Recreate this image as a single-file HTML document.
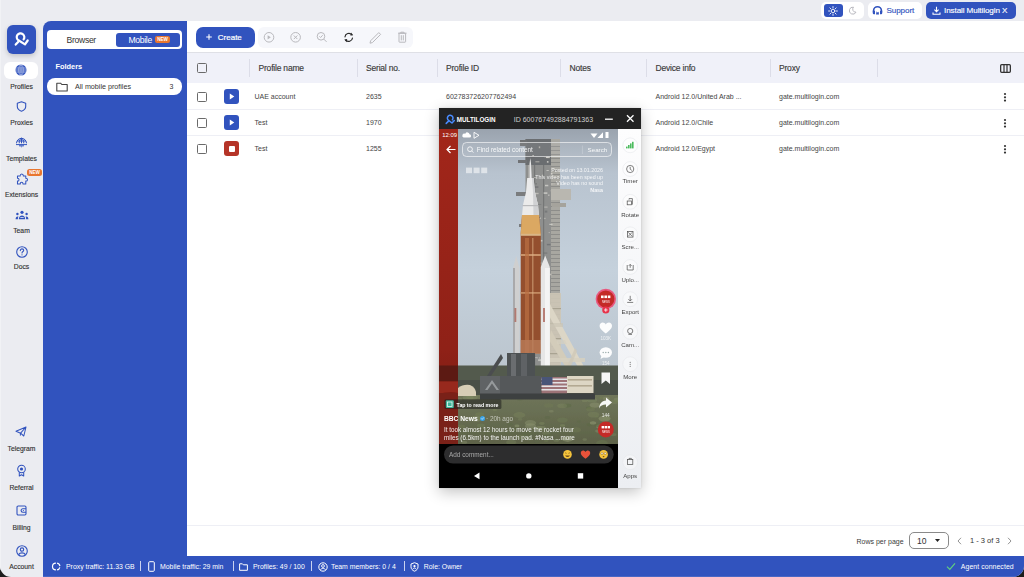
<!DOCTYPE html>
<html><head><meta charset="utf-8">
<style>
*{margin:0;padding:0;box-sizing:border-box}
html,body{width:1024px;height:577px;overflow:hidden;background:#1c1c1c;font-family:"Liberation Sans",sans-serif}
#win{position:absolute;left:0;top:0;width:1024px;height:577px;background:#ebecf1;border-radius:0 0 11px 11px;overflow:hidden}
.abs{position:absolute}
.blue{background:#3153be}
.nl{position:absolute;left:0;width:43px;text-align:center;font-size:6.8px;color:#303030;line-height:8px;-webkit-text-stroke:0.12px #303030}
svg{position:absolute;overflow:visible}
#panel{left:43px;top:21px;width:144px;height:556px;border-radius:8px 0 0 0}
#content{left:187px;top:21px;width:837px;height:535px;background:#fff}
#status{left:43px;top:556px;width:981px;height:21px;color:#fff;font-size:7.5px}
.th{position:absolute;top:63.2px;font-size:8.5px;color:#3a3a3a;font-weight:normal;line-height:10px;letter-spacing:-0.2px;-webkit-text-stroke:0.15px #3a3a3a}
.cell{position:absolute;font-size:7px;color:#444;line-height:8px}
.cb{position:absolute;left:197px;width:10px;height:10px;border:1.4px solid #6a6a6a;border-radius:1.5px}
.dv{position:absolute;top:59px;width:1px;height:18px;background:#dcdde8}
.rs{position:absolute;left:187px;width:837px;height:1px;background:#eeeff5}
.sb{position:absolute;top:562px;line-height:10px;white-space:nowrap;font-size:6.9px!important}
.sep{position:absolute;top:561px;width:1px;height:10px;background:#c9d2ef}
</style></head><body>
<div id="win"><div class="abs" style="left:0;top:0;width:1px;height:577px;background:#f1f2f5"></div>
  <!-- top bar -->
  <div class="abs" style="left:821px;top:2px;width:43px;height:17px;background:#fff;border-radius:5px"></div>
  <div class="abs blue" style="left:824px;top:4px;width:19px;height:13px;border-radius:3px"></div>
  <svg style="left:828px;top:5.5px" width="10" height="10" viewBox="0 0 10 10"><g stroke="#fff" stroke-width="0.9" stroke-linecap="round"><circle cx="5" cy="5" r="1.8" fill="none"/><path d="M5 0.6V1.8M5 8.2V9.4M0.6 5H1.8M8.2 5H9.4M1.9 1.9L2.7 2.7M7.3 7.3L8.1 8.1M1.9 8.1L2.7 7.3M7.3 2.7L8.1 1.9"/></g></svg>
  <svg style="left:848px;top:6px" width="9" height="9" viewBox="0 0 9 9"><path d="M5.5 1.2A3.5 3.5 0 1 0 8 6.2A3 3 0 0 1 5.5 1.2Z" fill="none" stroke="#b0b0b8" stroke-width="0.9"/></svg>
  <div class="abs" style="left:868px;top:2px;width:54px;height:17px;background:#fff;border-radius:5px"></div>
  <svg style="left:872px;top:5px" width="11" height="11" viewBox="0 0 11 11"><path d="M1.6 7.6V5.6A3.9 3.9 0 0 1 9.4 5.6V7.6" fill="none" stroke="#3153be" stroke-width="1.6"/><path d="M0.8 5.8H3V9.2H1.8A1 1 0 0 1 0.8 8.2Z M10.2 5.8H8V9.2H9.2A1 1 0 0 0 10.2 8.2Z" fill="#3153be"/><path d="M4 9.6L4.6 6.2L5.4 7.4L6.6 6.8L7 9.6Z" fill="#3153be"/></svg>
  <div class="abs" style="left:886.5px;top:6px;font-size:8.1px;line-height:10px;color:#3153be;font-weight:normal;letter-spacing:-0.1px;-webkit-text-stroke:0.15px #3153be">Support</div>
  <div class="abs blue" style="left:926px;top:2px;width:90px;height:17px;border-radius:5px"></div>
  <svg style="left:932px;top:5.5px" width="9" height="9" viewBox="0 0 9 9"><path d="M4.5 0.8V5.6M2.4 3.6L4.5 5.7L6.6 3.6M1 6.5V8.2H8V6.5" fill="none" stroke="#fff" stroke-width="1.1"/></svg>
  <div class="abs" style="left:944px;top:6px;font-size:8.1px;line-height:10px;color:#fff;font-weight:normal;letter-spacing:-0.1px;-webkit-text-stroke:0.15px #fff">Install Multilogin X</div>

  <!-- logo -->
  <div class="abs blue" style="left:7px;top:25px;width:29px;height:29px;border-radius:6px;box-shadow:0 2px 5px rgba(0,0,0,.18)"></div>
  <svg style="left:10px;top:28px" width="24" height="24" viewBox="0 0 24 24"><g fill="none" stroke="#fff" stroke-width="2.2" stroke-linecap="round" stroke-linejoin="round"><path d="M13.6 11.4A3.8 3.8 0 1 0 8.4 12.3L15 16.4L17.7 12.5"/><path d="M5.7 16.6L8.1 14"/></g></svg>

  <!-- left nav -->
  <div class="abs" style="left:4px;top:62px;width:34px;height:17px;background:#fff;border-radius:6px"></div>
  <svg style="left:15px;top:64px" width="12" height="12" viewBox="0 0 12 12"><circle cx="6" cy="6" r="5.5" fill="#3153be"/><g stroke="#fff" stroke-width="0.55" fill="none" opacity=".85"><ellipse cx="6" cy="6" rx="2.2" ry="5.2"/><path d="M1 4H11M1 8H11M6 0.8V11.2M0.6 6H11.4"/></g></svg>
  <div class="nl" style="top:83.1px">Profiles</div>
  <svg style="left:16px;top:101px" width="11" height="11" viewBox="0 0 11 11"><path d="M5.5 0.8L9.7 2.3V5.6C9.7 8 7.8 9.5 5.5 10.3C3.2 9.5 1.3 8 1.3 5.6V2.3Z" fill="none" stroke="#3153be" stroke-width="1.1" stroke-linejoin="round"/></svg>
  <div class="nl" style="top:119.1px">Proxies</div>
  <svg style="left:15px;top:136px" width="13" height="12" viewBox="0 0 13 12"><g fill="none" stroke="#3153be" stroke-width="1"><path d="M1.5 7.3A5 5 0 0 1 11.5 7.3"/><path d="M4.2 7.3C4.2 4.5 5.3 2.6 6.5 2.2C7.7 2.6 8.8 4.5 8.8 7.3M6.5 2.2V7.3M2 5H11"/><path d="M1 8.6H12M4 9.8H9"/></g><path d="M5.6 10.4H7.4L6.5 11.6Z" fill="#3153be"/></svg>
  <div class="nl" style="top:155.3px">Templates</div>
  <svg style="left:15.8px;top:172.8px" width="12" height="12" viewBox="0 0 13 13"><path d="M4.5 3.2C4.5 1.7 5.4 1 6.3 1C7.2 1 8 1.7 8 3.2H10.6V5.6C12 5.6 12.5 6.4 12.5 7.2C12.5 8 12 8.8 10.6 8.8V11.8H7.6C7.6 10.6 7 10 6.1 10C5.2 10 4.6 10.6 4.6 11.8H1.6V8.8C2.8 8.8 3.3 8.1 3.3 7.3C3.3 6.5 2.8 5.8 1.6 5.8V3.2Z" fill="none" stroke="#3153be" stroke-width="1.1" stroke-linejoin="round"/></svg>
  <div class="abs" style="left:27px;top:169px;width:15px;height:7px;background:#e8762f;border-radius:2.5px"></div><svg style="left:27px;top:169px" width="15" height="7" viewBox="0 0 15 7"><text x="7.5" y="5.3" text-anchor="middle" font-family="Liberation Sans" font-weight="bold" font-size="4.6" fill="#fff">NEW</text></svg>
  <div class="nl" style="top:191.3px">Extensions</div>
  <svg style="left:14.5px;top:210px" width="14" height="10" viewBox="0 0 14 10"><g fill="#3153be"><circle cx="7" cy="2.3" r="1.6"/><circle cx="2.4" cy="4" r="1.2"/><circle cx="11.6" cy="4" r="1.2"/><path d="M3.8 9.2C3.8 6.8 5.2 5.4 7 5.4C8.8 5.4 10.2 6.8 10.2 9.2Z"/><path d="M0.6 9.2C0.6 7.5 1.3 6.4 2.6 6.4C3 6.4 3.3 6.5 3.4 6.6C3 7.3 2.9 8.2 2.9 9.2Z"/><path d="M13.4 9.2C13.4 7.5 12.7 6.4 11.4 6.4C11 6.4 10.7 6.5 10.6 6.6C11 7.3 11.1 8.2 11.1 9.2Z"/></g><path d="M5.3 7.5H8.7" stroke="#fff" stroke-width="0.7"/></svg>
  <div class="nl" style="top:227.3px">Team</div>
  <svg style="left:15.5px;top:245.5px" width="12" height="12" viewBox="0 0 12 12"><circle cx="6" cy="6" r="5.3" fill="none" stroke="#3153be" stroke-width="1.1"/><path d="M4.3 4.6C4.3 3.5 5.1 2.9 6 2.9C6.9 2.9 7.7 3.5 7.7 4.4C7.7 5.5 6 5.6 6 7" fill="none" stroke="#3153be" stroke-width="1.1" stroke-linecap="round"/><circle cx="6" cy="8.8" r="0.65" fill="#3153be"/></svg>
  <div class="nl" style="top:263.3px">Docs</div>

  <svg style="left:15px;top:425.5px" width="12" height="11" viewBox="0 0 12 11"><path d="M1 5.2L11 1L8.8 10L5.6 7.2ZM5.6 7.2L11 1" fill="none" stroke="#3153be" stroke-width="1.05" stroke-linejoin="round"/><path d="M5.4 7V9.6" stroke="#3153be" stroke-width="1"/></svg>
  <div class="nl" style="top:444.5px">Telegram</div>
  <svg style="left:16px;top:464px" width="11" height="13" viewBox="0 0 11 13"><circle cx="5.5" cy="5" r="3.8" fill="none" stroke="#3153be" stroke-width="1.05"/><circle cx="5.5" cy="5" r="1.6" fill="#3153be"/><path d="M3.3 8.2V12L5.5 10.8L7.7 12V8.2" fill="none" stroke="#3153be" stroke-width="1.05" stroke-linejoin="round"/></svg>
  <div class="nl" style="top:484.3px">Referral</div>
  <svg style="left:16px;top:505px" width="11" height="11" viewBox="0 0 11 11"><rect x="1" y="1" width="9" height="9" rx="1.2" fill="none" stroke="#3153be" stroke-width="1.1"/><path d="M10 3.8H6.8A1.7 1.7 0 0 0 6.8 7.2H10" fill="none" stroke="#3153be" stroke-width="1.1"/><circle cx="7.4" cy="5.5" r="0.6" fill="#3153be"/></svg>
  <div class="nl" style="top:523.8px">Billing</div>
  <svg style="left:15.5px;top:544.5px" width="12" height="12" viewBox="0 0 12 12"><circle cx="6" cy="6" r="5.3" fill="none" stroke="#3153be" stroke-width="1.1"/><circle cx="6" cy="4.6" r="1.7" fill="none" stroke="#3153be" stroke-width="1.1"/><path d="M2.6 9.6C3.3 8.4 4.5 7.9 6 7.9C7.5 7.9 8.7 8.4 9.4 9.6" fill="none" stroke="#3153be" stroke-width="1.1"/></svg>
  <div class="nl" style="top:563.3px">Account</div>

  <!-- blue panel -->
  <div id="panel" class="abs blue"></div>
  <div class="abs" style="left:47px;top:30px;width:135px;height:19px;background:#fff;border-radius:4px"></div>
  <div class="abs" style="left:66.5px;top:34.6px;font-size:8.6px;line-height:10px;color:#333;letter-spacing:-0.3px;white-space:nowrap">Browser</div>
  <div class="abs" style="left:116px;top:32.5px;width:64px;height:14px;background:#3153be;border-radius:3px"></div>
  <div class="abs" style="left:128.4px;top:34.6px;font-size:8.6px;line-height:10px;color:#fff;letter-spacing:-0.3px">Mobile</div>
  <div class="abs" style="left:154.5px;top:36px;width:15px;height:7px;background:#e8762f;border-radius:2px"></div><svg style="left:154.5px;top:36px" width="15" height="7" viewBox="0 0 15 7"><text x="7.5" y="5.2" text-anchor="middle" font-family="Liberation Sans" font-weight="bold" font-size="4.6" fill="#fff">NEW</text></svg>
  <div class="abs" style="left:55.5px;top:62px;font-size:7.4px;line-height:10px;font-weight:bold;color:#fff">Folders</div>
  <div class="abs" style="left:47px;top:78px;width:135px;height:17px;background:#fff;border-radius:8px"></div>
  <svg style="left:56px;top:81.5px" width="12" height="10" viewBox="0 0 12 10"><path d="M0.8 1.2H4.6L5.8 2.5H11.2V9H0.8Z" fill="none" stroke="#444" stroke-width="1.1" stroke-linejoin="round"/></svg>
  <div class="abs" style="left:75px;top:82.5px;font-size:7.15px;line-height:8px;color:#333">All mobile profiles</div>
  <div class="abs" style="left:169.5px;top:82.5px;font-size:7px;line-height:8px;color:#333">3</div>

  <!-- content -->
  <div id="content" class="abs"></div>
  <div class="abs blue" style="left:195.5px;top:26.5px;width:59px;height:21px;border-radius:7px"></div>
  <svg style="left:205.8px;top:34.4px" width="6" height="6" viewBox="0 0 6 6"><path d="M3 0.2V5.8M0.2 3H5.8" stroke="#fff" stroke-width="1.1"/></svg>
  <div class="abs" style="left:217.8px;top:32.6px;font-size:8px;line-height:10px;color:#fff;font-weight:normal;-webkit-text-stroke:0.2px #fff">Create</div>
  <div class="abs" style="left:258px;top:26.5px;width:155px;height:21px;background:#f6f7fb;border-radius:6px"></div>
  <g></g>
  <svg style="left:262px;top:31px" width="150" height="13" viewBox="0 0 150 13">
    <g fill="none" stroke="#b9b9bd" stroke-width="1">
      <circle cx="7" cy="6.3" r="4.8"/><path d="M5.6 4.2V8.4L8.8 6.3Z" fill="#b9b9bd" stroke="none"/>
      <circle cx="33.6" cy="6.3" r="4.8"/><path d="M31.8 4.5L35.4 8.1M35.4 4.5L31.8 8.1"/>
      <circle cx="59" cy="5.3" r="3.8"/><path d="M61.8 8.1L64.6 10.9M57.4 5.3L58.6 6.5L60.7 4.2"/>
      <path d="M108 12.2L108.6 9.8L116.8 1.6L118.6 3.4L110.4 11.6Z"/>
      <rect x="137" y="2.2" width="6.6" height="9" rx="0.6"/><path d="M136 2.2H144.6M138.8 2.2V1.2H141.8V2.2M139.3 4.2V9.4M141.3 4.2V9.4"/>
    </g>
    <g fill="none" stroke="#2b2b2b" stroke-width="1.2" stroke-linecap="round"><path d="M83 5.8A3.9 3.9 0 0 1 89.8 3.7M90.5 7A3.9 3.9 0 0 1 83.7 9.1"/></g>
    <path d="M89 1.5L91.2 4.3L88.3 4.6Z M84.6 11.2L82.3 8.4L85.2 8.1Z" fill="#2b2b2b"/>
  </svg>

  <!-- table header -->
  <div class="abs" style="left:187px;top:52px;width:837px;height:1.5px;background:#dfe0e6"></div>
  <div class="abs" style="left:187px;top:53px;width:837px;height:30px;background:#f0f1f9"></div>
  <div class="cb" style="top:63px"></div>
  <div class="dv" style="left:249px"></div>
  <div class="dv" style="left:357px"></div>
  <div class="dv" style="left:437px"></div>
  <div class="dv" style="left:560px"></div>
  <div class="dv" style="left:646px"></div>
  <div class="dv" style="left:770px"></div>
  <div class="dv" style="left:877px"></div>
  <div class="th" style="left:258.5px">Profile name</div>
  <div class="th" style="left:366px">Serial no.</div>
  <div class="th" style="left:446px">Profile ID</div>
  <div class="th" style="left:569.5px">Notes</div>
  <div class="th" style="left:655.5px">Device info</div>
  <div class="th" style="left:779px">Proxy</div>
  <svg style="left:1000px;top:64px" width="11" height="9" viewBox="0 0 11 9"><rect x="0.65" y="0.65" width="9.7" height="7.7" rx="1" fill="none" stroke="#333" stroke-width="1.3"/><path d="M4 0.7V8.3M7 0.7V8.3" stroke="#333" stroke-width="1.2"/></svg>

  <!-- rows -->
  <div class="rs" style="top:109px"></div>
  <div class="rs" style="top:135px"></div>
  <div class="cb" style="top:92px"></div>
  <div class="cb" style="top:118px"></div>
  <div class="cb" style="top:144px"></div>
  <div class="abs blue" style="left:224px;top:89px;width:15px;height:15px;border-radius:3px"></div>
  <div class="abs blue" style="left:224px;top:115px;width:15px;height:15px;border-radius:3px"></div>
  <div class="abs" style="left:224px;top:141px;width:15px;height:15px;border-radius:3px;background:#b53428"></div>
  <svg style="left:224px;top:89px" width="15" height="41" viewBox="0 0 15 41"><path d="M5.8 4.6V10.4L10.3 7.5Z M5.8 30.6V36.4L10.3 33.5Z" fill="#fff"/></svg>
  <div class="abs" style="left:228.5px;top:145.5px;width:6px;height:6px;background:#fff;border-radius:1px"></div>

  <div class="cell" style="left:254.5px;top:92.5px">UAE account</div>
  <div class="cell" style="left:254.5px;top:118.5px">Test</div>
  <div class="cell" style="left:254.5px;top:144.5px">Test</div>
  <div class="cell" style="left:366px;top:92.5px">2635</div>
  <div class="cell" style="left:366px;top:118.5px">1970</div>
  <div class="cell" style="left:366px;top:144.5px">1255</div>
  <div class="cell" style="left:446px;top:92.5px">602783726207762494</div>
  <div class="cell" style="left:655.5px;top:92.5px">Android 12.0/United Arab ...</div>
  <div class="cell" style="left:655.5px;top:118.5px">Android 12.0/Chile</div>
  <div class="cell" style="left:655.5px;top:144.5px">Android 12.0/Egypt</div>
  <div class="cell" style="left:779px;top:92.5px">gate.multilogin.com</div>
  <div class="cell" style="left:779px;top:118.5px">gate.multilogin.com</div>
  <div class="cell" style="left:779px;top:144.5px">gate.multilogin.com</div>
  <svg style="left:1003px;top:92px" width="4" height="60" viewBox="0 0 4 60"><g fill="#333"><circle cx="2" cy="2" r="1.1"/><circle cx="2" cy="5.3" r="1.1"/><circle cx="2" cy="8.6" r="1.1"/><circle cx="2" cy="28" r="1.1"/><circle cx="2" cy="31.3" r="1.1"/><circle cx="2" cy="34.6" r="1.1"/><circle cx="2" cy="54" r="1.1"/><circle cx="2" cy="57.3" r="1.1"/><circle cx="2" cy="60.6" r="1.1"/></g></svg>

  <!-- footer -->
  <div class="rs" style="top:525px"></div>
  <div class="abs" style="left:856.5px;top:537.5px;font-size:7px;line-height:8px;color:#3a3a3a">Rows per page</div>
  <div class="abs" style="left:908.5px;top:532px;width:40px;height:17px;border:1px solid #8a8a8a;border-radius:5px"></div>
  <div class="abs" style="left:917px;top:536px;font-size:8.6px;line-height:10px;color:#333">10</div>
  <svg style="left:934.5px;top:539px" width="5" height="3" viewBox="0 0 5 3"><path d="M0 0H5L2.5 3Z" fill="#222"/></svg>
  <svg style="left:956.5px;top:537px" width="5" height="8" viewBox="0 0 5 8"><path d="M4 0.8L1 4L4 7.2" fill="none" stroke="#888" stroke-width="0.9"/></svg>
  <div class="abs" style="left:970px;top:537px;font-size:7.5px;line-height:8px;color:#333">1 - 3 of 3</div>
  <svg style="left:1007px;top:537px" width="5" height="8" viewBox="0 0 5 8"><path d="M1 0.8L4 4L1 7.2" fill="none" stroke="#888" stroke-width="0.9"/></svg>

  <!-- status bar -->
  <div id="status" class="abs blue"></div>
  <div class="abs" style="left:43px;top:576px;width:981px;height:1px;background:#4866c4"></div>
  <svg style="left:52px;top:561.5px" width="9" height="9" viewBox="0 0 9 9"><g fill="none" stroke="#fff" stroke-width="1.2"><path d="M3.9 1.1A3.4 3.4 0 0 0 3.9 7.9M5.1 1.1A3.4 3.4 0 0 1 7.9 4.1M7.8 5.3A3.4 3.4 0 0 1 5.1 7.9"/></g></svg>
  <div class="sb" style="left:66px;color:#fff;font-size:7.5px">Proxy traffic: 11.33 GB</div>
  <div class="sep" style="left:140px"></div>
  <svg style="left:147.5px;top:561px" width="7" height="11" viewBox="0 0 7 11"><rect x="0.7" y="0.7" width="5.6" height="9.6" rx="1" fill="none" stroke="#fff" stroke-width="1"/></svg>
  <div class="sb" style="left:160px;color:#fff;font-size:7.5px">Mobile traffic: 29 min</div>
  <div class="sep" style="left:233px"></div>
  <svg style="left:239px;top:562.5px" width="9" height="8" viewBox="0 0 9 8"><path d="M0.6 0.8H3.4L4.3 1.8H8.4V7.3H0.6Z" fill="none" stroke="#fff" stroke-width="1"/></svg>
  <div class="sb" style="left:253px;color:#fff;font-size:7.5px">Profiles: 49 / 100</div>
  <div class="sep" style="left:311px"></div>
  <svg style="left:318px;top:561.5px" width="10" height="10" viewBox="0 0 10 10"><circle cx="5" cy="5" r="4.2" fill="none" stroke="#fff" stroke-width="1"/><circle cx="5" cy="4" r="1.4" fill="none" stroke="#fff" stroke-width="0.9"/><path d="M2.5 7.8C3 6.8 3.9 6.4 5 6.4C6.1 6.4 7 6.8 7.5 7.8" fill="none" stroke="#fff" stroke-width="0.9"/></svg>
  <div class="sb" style="left:331px;color:#fff;font-size:7.5px">Team members: 0 / 4</div>
  <div class="sep" style="left:403.5px"></div>
  <svg style="left:410px;top:561.5px" width="9" height="10" viewBox="0 0 9 10"><path d="M4.5 0.7L8 2V4.8C8 7 6.5 8.4 4.5 9.2C2.5 8.4 1 7 1 4.8V2Z" fill="none" stroke="#fff" stroke-width="1"/><circle cx="4.5" cy="4.2" r="1.1" fill="#fff"/><path d="M2.9 7C3.3 6.3 3.8 6 4.5 6C5.2 6 5.7 6.3 6.1 7" stroke="#fff" stroke-width="0.9" fill="none"/></svg>
  <div class="sb" style="left:423.8px;color:#fff;font-size:7.5px">Role: Owner</div>
  <svg style="left:946px;top:561.5px" width="10" height="9" viewBox="0 0 10 9"><path d="M1 4.6L3.8 7.4L9 1.4" fill="none" stroke="#5fcf7f" stroke-width="1.2"/></svg>
  <div class="sb" style="left:960.8px;color:#fff;font-size:7.5px;letter-spacing:0.08px">Agent connected</div>

  <!-- phone window -->
  <div class="abs" style="left:439px;top:108px;width:202px;height:380px;background:#dfe0e4;box-shadow:0 4px 14px rgba(0,0,0,.24),0 0 2px rgba(0,0,0,.12)"></div>
  <div class="abs" style="left:618px;top:129px;width:23px;height:359px;background:linear-gradient(#fdfdfe,#eceef2)"></div>
  <svg style="left:439px;top:108px" width="202" height="380" viewBox="0 0 202 380">
    <defs>
      <linearGradient id="sky" x1="0" y1="0" x2="0" y2="1">
        <stop offset="0" stop-color="#9aa3ae"/>
        <stop offset="0.14" stop-color="#b8c3cf"/>
        <stop offset="0.45" stop-color="#c5d1dc"/>
        <stop offset="0.75" stop-color="#bcc6cf"/>
        <stop offset="1" stop-color="#b5bfc8"/>
      </linearGradient>
      <linearGradient id="red" x1="0" y1="0" x2="0" y2="1">
        <stop offset="0" stop-color="#a2261a"/>
        <stop offset="0.7" stop-color="#8f2117"/>
        <stop offset="1" stop-color="#6e1a12"/>
      </linearGradient>
      <linearGradient id="veg" x1="0" y1="0" x2="0" y2="1">
        <stop offset="0" stop-color="#6f755a"/>
        <stop offset="0.5" stop-color="#666c50"/>
        <stop offset="1" stop-color="#5d6249"/>
      </linearGradient>
      <linearGradient id="shade" x1="0" y1="0" x2="0" y2="1">
        <stop offset="0" stop-color="#000" stop-opacity="0"/>
        <stop offset="1" stop-color="#000" stop-opacity="0.35"/>
      </linearGradient>
      <linearGradient id="topshade" x1="0" y1="0" x2="0" y2="1">
        <stop offset="0" stop-color="#000" stop-opacity="0.18"/>
        <stop offset="1" stop-color="#000" stop-opacity="0"/>
      </linearGradient>
      <filter id="bl" x="-10%" y="-10%" width="120%" height="120%"><feGaussianBlur stdDeviation="0.6"/></filter>
      <clipPath id="scr"><rect x="0" y="21" width="179" height="315"/></clipPath>
    </defs>
    <!-- title bar -->
    <rect x="0" y="0" width="202" height="21" fill="#232323"/>
    <g fill="none" stroke="#4a8cff" stroke-width="1.5" stroke-linecap="round" stroke-linejoin="round"><path d="M13.4 11.8A2.8 2.8 0 1 0 9.6 12.4L13 15L15.3 12.6"/><path d="M7.2 15.4L9.3 13.4"/></g>
    <text x="17.8" y="13.6" font-family="Liberation Sans" font-weight="bold" font-size="6.3" fill="#fff">MULTILOGIN</text>
    <text x="74.7" y="13.6" font-family="Liberation Sans" font-size="7.04" fill="#d0d0d0">ID 600767492884791363</text>
    <path d="M166 11.2H173.8" stroke="#fff" stroke-width="1.3"/>
    <path d="M188 7.2L194.5 13.7M194.5 7.2L188 13.7" stroke="#fff" stroke-width="1.3"/>
    <g clip-path="url(#scr)">
      <!-- scene -->
      <rect x="0" y="21" width="179" height="315" fill="url(#sky)"/>
      <g filter="url(#bl)">
        <!-- tower upper -->
        <rect x="86.5" y="31" width="34.5" height="236" fill="#8e8f8e"/>
        <rect x="86.5" y="31" width="26" height="26" fill="#6b6d6f"/>
        <rect x="112" y="31" width="9" height="236" fill="#a8a7a1"/>
        <rect x="112" y="34" width="9" height="0.9" fill="#7c7d7c" opacity=".7"/>
        <rect x="112" y="38" width="9" height="0.9" fill="#7c7d7c" opacity=".7"/>
        <rect x="112" y="42" width="9" height="0.9" fill="#7c7d7c" opacity=".7"/>
        <rect x="112" y="46" width="9" height="0.9" fill="#7c7d7c" opacity=".7"/>
        <rect x="112" y="50" width="9" height="0.9" fill="#7c7d7c" opacity=".7"/>
        <rect x="112" y="54" width="9" height="0.9" fill="#7c7d7c" opacity=".7"/>
        <rect x="112" y="58" width="9" height="0.9" fill="#7c7d7c" opacity=".7"/>
        <rect x="112" y="62" width="9" height="0.9" fill="#7c7d7c" opacity=".7"/>
        <rect x="112" y="66" width="9" height="0.9" fill="#7c7d7c" opacity=".7"/>
        <rect x="112" y="70" width="9" height="0.9" fill="#7c7d7c" opacity=".7"/>
        <rect x="112" y="74" width="9" height="0.9" fill="#7c7d7c" opacity=".7"/>
        <rect x="112" y="78" width="9" height="0.9" fill="#7c7d7c" opacity=".7"/>
        <rect x="112" y="82" width="9" height="0.9" fill="#7c7d7c" opacity=".7"/>
        <rect x="112" y="86" width="9" height="0.9" fill="#7c7d7c" opacity=".7"/>
        <rect x="112" y="90" width="9" height="0.9" fill="#7c7d7c" opacity=".7"/>
        <rect x="112" y="94" width="9" height="0.9" fill="#7c7d7c" opacity=".7"/>
        <rect x="112" y="98" width="9" height="0.9" fill="#7c7d7c" opacity=".7"/>
        <rect x="112" y="102" width="9" height="0.9" fill="#7c7d7c" opacity=".7"/>
        <rect x="112" y="106" width="9" height="0.9" fill="#7c7d7c" opacity=".7"/>
        <rect x="112" y="110" width="9" height="0.9" fill="#7c7d7c" opacity=".7"/>
        <rect x="112" y="114" width="9" height="0.9" fill="#7c7d7c" opacity=".7"/>
        <rect x="112" y="118" width="9" height="0.9" fill="#7c7d7c" opacity=".7"/>
        <rect x="112" y="122" width="9" height="0.9" fill="#7c7d7c" opacity=".7"/>
        <rect x="112" y="126" width="9" height="0.9" fill="#7c7d7c" opacity=".7"/>
        <rect x="112" y="130" width="9" height="0.9" fill="#7c7d7c" opacity=".7"/>
        <rect x="112" y="134" width="9" height="0.9" fill="#7c7d7c" opacity=".7"/>
        <rect x="112" y="138" width="9" height="0.9" fill="#7c7d7c" opacity=".7"/>
        <rect x="112" y="142" width="9" height="0.9" fill="#7c7d7c" opacity=".7"/>
        <rect x="112" y="146" width="9" height="0.9" fill="#7c7d7c" opacity=".7"/>
        <rect x="112" y="150" width="9" height="0.9" fill="#7c7d7c" opacity=".7"/>
        <rect x="112" y="154" width="9" height="0.9" fill="#7c7d7c" opacity=".7"/>
        <rect x="112" y="158" width="9" height="0.9" fill="#7c7d7c" opacity=".7"/>
        <rect x="112" y="162" width="9" height="0.9" fill="#7c7d7c" opacity=".7"/>
        <rect x="112" y="166" width="9" height="0.9" fill="#7c7d7c" opacity=".7"/>
        <rect x="112" y="170" width="9" height="0.9" fill="#7c7d7c" opacity=".7"/>
        <rect x="112" y="174" width="9" height="0.9" fill="#7c7d7c" opacity=".7"/>
        <rect x="112" y="178" width="9" height="0.9" fill="#7c7d7c" opacity=".7"/>
        <rect x="112" y="182" width="9" height="0.9" fill="#7c7d7c" opacity=".7"/>
        <rect x="112" y="186" width="9" height="0.9" fill="#7c7d7c" opacity=".7"/>
        <rect x="112" y="190" width="9" height="0.9" fill="#7c7d7c" opacity=".7"/>
        <rect x="112" y="194" width="9" height="0.9" fill="#7c7d7c" opacity=".7"/>
        <rect x="112" y="198" width="9" height="0.9" fill="#7c7d7c" opacity=".7"/>
        <rect x="112" y="202" width="9" height="0.9" fill="#7c7d7c" opacity=".7"/>
        <rect x="112" y="206" width="9" height="0.9" fill="#7c7d7c" opacity=".7"/>
        <rect x="112" y="210" width="9" height="0.9" fill="#7c7d7c" opacity=".7"/>
        <rect x="112" y="214" width="9" height="0.9" fill="#7c7d7c" opacity=".7"/>
        <rect x="112" y="218" width="9" height="0.9" fill="#7c7d7c" opacity=".7"/>
        <rect x="112" y="222" width="9" height="0.9" fill="#7c7d7c" opacity=".7"/>
        <rect x="112" y="226" width="9" height="0.9" fill="#7c7d7c" opacity=".7"/>
        <rect x="112" y="230" width="9" height="0.9" fill="#7c7d7c" opacity=".7"/>
        <rect x="112" y="234" width="9" height="0.9" fill="#7c7d7c" opacity=".7"/>
        <rect x="112" y="238" width="9" height="0.9" fill="#7c7d7c" opacity=".7"/>
        <rect x="112" y="242" width="9" height="0.9" fill="#7c7d7c" opacity=".7"/>
        <rect x="112" y="246" width="9" height="0.9" fill="#7c7d7c" opacity=".7"/>
        <rect x="112" y="250" width="9" height="0.9" fill="#7c7d7c" opacity=".7"/>
        <rect x="112" y="254" width="9" height="0.9" fill="#7c7d7c" opacity=".7"/>
        <rect x="112" y="258" width="9" height="0.9" fill="#7c7d7c" opacity=".7"/>
        <rect x="112" y="262" width="9" height="0.9" fill="#7c7d7c" opacity=".7"/>
        <rect x="95" y="57" width="1.2" height="210" fill="#6e6f71" opacity=".8"/>
        <rect x="104" y="57" width="1.2" height="210" fill="#6e6f71" opacity=".8"/>
        <rect x="89" y="57" width="1" height="210" fill="#b8b7b2" opacity=".6"/>
        <rect x="103.2" y="205.6" width="3.4" height="1.9" fill="#707274" opacity="0.51"/>
        <rect x="99.1" y="251.2" width="2.9" height="1.9" fill="#d9d8d2" opacity="0.65"/>
        <rect x="109.6" y="124.1" width="1.3" height="1.0" fill="#c8c6bf" opacity="0.66"/>
        <rect x="91.7" y="234.0" width="2.2" height="1.7" fill="#d9d8d2" opacity="0.56"/>
        <rect x="103.1" y="66.6" width="1.0" height="1.8" fill="#c8c6bf" opacity="0.81"/>
        <rect x="112.0" y="75.5" width="1.5" height="1.1" fill="#c8c6bf" opacity="0.72"/>
        <rect x="104.6" y="84.3" width="3.8" height="1.6" fill="#e8e6e0" opacity="0.62"/>
        <rect x="96.4" y="75.5" width="1.4" height="0.8" fill="#5f6163" opacity="0.83"/>
        <rect x="102.2" y="172.7" width="3.1" height="0.8" fill="#5f6163" opacity="0.83"/>
        <rect x="99.5" y="109.4" width="2.4" height="1.6" fill="#d9d8d2" opacity="0.60"/>
        <rect x="111.4" y="252.5" width="2.1" height="1.2" fill="#707274" opacity="0.82"/>
        <rect x="96.5" y="168.7" width="1.0" height="0.8" fill="#c8c6bf" opacity="0.75"/>
        <rect x="111.8" y="64.9" width="1.7" height="1.8" fill="#e8e6e0" opacity="0.64"/>
        <rect x="96.2" y="156.6" width="3.3" height="0.8" fill="#5f6163" opacity="0.84"/>
        <rect x="88.0" y="251.8" width="1.3" height="1.1" fill="#707274" opacity="0.65"/>
        <rect x="90.9" y="100.3" width="3.1" height="0.8" fill="#5f6163" opacity="0.62"/>
        <rect x="107.8" y="179.7" width="3.2" height="1.1" fill="#e8e6e0" opacity="0.56"/>
        <rect x="88.3" y="261.0" width="2.6" height="1.2" fill="#c8c6bf" opacity="0.80"/>
        <rect x="95.9" y="94.5" width="3.0" height="0.9" fill="#d9d8d2" opacity="0.82"/>
        <rect x="95.7" y="84.8" width="3.9" height="1.4" fill="#c8c6bf" opacity="0.75"/>
        <rect x="107.5" y="62.1" width="2.3" height="0.9" fill="#e8e6e0" opacity="0.62"/>
        <rect x="98.8" y="263.8" width="3.6" height="2.0" fill="#e8e6e0" opacity="0.88"/>
        <rect x="104.9" y="109.8" width="1.8" height="1.3" fill="#c8c6bf" opacity="0.55"/>
        <rect x="108.4" y="158.2" width="1.5" height="1.9" fill="#5f6163" opacity="0.57"/>
        <rect x="99.8" y="154.4" width="2.6" height="1.4" fill="#d9d8d2" opacity="0.81"/>
        <rect x="107.1" y="195.0" width="3.0" height="1.7" fill="#5f6163" opacity="0.72"/>
        <rect x="104.4" y="226.8" width="1.8" height="2.0" fill="#5f6163" opacity="0.88"/>
        <rect x="95.8" y="78.4" width="3.6" height="1.3" fill="#5f6163" opacity="0.63"/>
        <rect x="94.1" y="103.3" width="2.5" height="1.6" fill="#5f6163" opacity="0.64"/>
        <rect x="103.7" y="204.7" width="3.5" height="1.2" fill="#c8c6bf" opacity="0.85"/>
        <rect x="104.9" y="258.6" width="3.9" height="1.4" fill="#707274" opacity="0.89"/>
        <rect x="92.2" y="119.8" width="3.6" height="1.1" fill="#d9d8d2" opacity="0.79"/>
        <rect x="106.0" y="76.8" width="3.3" height="1.5" fill="#e8e6e0" opacity="0.62"/>
        <rect x="101.4" y="234.0" width="1.8" height="2.0" fill="#c8c6bf" opacity="0.56"/>
        <rect x="98.5" y="184.9" width="1.7" height="1.6" fill="#d9d8d2" opacity="0.89"/>
        <rect x="112.5" y="75.5" width="3.7" height="0.8" fill="#c8c6bf" opacity="0.69"/>
        <rect x="101.3" y="131.9" width="2.1" height="1.6" fill="#d9d8d2" opacity="0.74"/>
        <rect x="93.2" y="242.1" width="1.0" height="1.2" fill="#5f6163" opacity="0.84"/>
        <rect x="109.5" y="193.7" width="2.6" height="2.0" fill="#707274" opacity="0.75"/>
        <rect x="89.5" y="161.2" width="2.0" height="1.5" fill="#5f6163" opacity="0.83"/>
        <rect x="97.9" y="221.7" width="2.9" height="1.2" fill="#c8c6bf" opacity="0.56"/>
        <rect x="97.0" y="145.8" width="1.6" height="0.9" fill="#d9d8d2" opacity="0.64"/>
        <rect x="110.2" y="38.2" width="1.3" height="1.4" fill="#707274" opacity="0.72"/>
        <rect x="95.5" y="236.1" width="2.7" height="1.3" fill="#c8c6bf" opacity="0.70"/>
        <rect x="99.5" y="198.1" width="2.2" height="1.8" fill="#c8c6bf" opacity="0.74"/>
        <rect x="93.8" y="259.7" width="2.5" height="1.2" fill="#5f6163" opacity="0.88"/>
        <rect x="95.0" y="248.1" width="1.4" height="0.7" fill="#707274" opacity="0.88"/>
        <rect x="93.4" y="47.0" width="1.4" height="1.2" fill="#e8e6e0" opacity="0.71"/>
        <rect x="94.1" y="249.4" width="3.3" height="1.0" fill="#5f6163" opacity="0.84"/>
        <rect x="105.8" y="102.6" width="2.5" height="2.0" fill="#707274" opacity="0.76"/>
        <rect x="102.7" y="206.0" width="1.4" height="1.7" fill="#5f6163" opacity="0.61"/>
        <rect x="105.4" y="176.7" width="3.2" height="0.7" fill="#5f6163" opacity="0.64"/>
        <rect x="106.4" y="171.5" width="1.1" height="1.0" fill="#e8e6e0" opacity="0.77"/>
        <rect x="89.8" y="193.4" width="1.6" height="1.3" fill="#e8e6e0" opacity="0.74"/>
        <rect x="104.9" y="253.4" width="2.9" height="1.8" fill="#e8e6e0" opacity="0.69"/>
        <rect x="104.7" y="200.6" width="3.7" height="1.3" fill="#d9d8d2" opacity="0.62"/>
        <rect x="87.1" y="214.1" width="2.7" height="1.5" fill="#e8e6e0" opacity="0.86"/>
        <rect x="90.7" y="146.1" width="2.6" height="1.3" fill="#5f6163" opacity="0.72"/>
        <rect x="98.1" y="160.4" width="1.1" height="1.7" fill="#5f6163" opacity="0.83"/>
        <rect x="107.6" y="188.0" width="1.1" height="1.6" fill="#d9d8d2" opacity="0.90"/>
        <rect x="105.2" y="49.0" width="3.5" height="1.0" fill="#d9d8d2" opacity="0.78"/>
        <rect x="90.5" y="104.1" width="3.8" height="0.9" fill="#707274" opacity="0.57"/>
        <rect x="107.9" y="53.2" width="1.6" height="1.4" fill="#e8e6e0" opacity="0.80"/>
        <rect x="94.3" y="167.1" width="1.4" height="1.2" fill="#707274" opacity="0.55"/>
        <rect x="98.2" y="109.1" width="2.8" height="1.3" fill="#5f6163" opacity="0.87"/>
        <rect x="90.6" y="104.6" width="2.7" height="1.6" fill="#5f6163" opacity="0.86"/>
        <rect x="101.4" y="178.3" width="1.8" height="1.4" fill="#5f6163" opacity="0.83"/>
        <rect x="94.4" y="258.4" width="3.4" height="1.8" fill="#e8e6e0" opacity="0.79"/>
        <rect x="91.7" y="199.2" width="3.0" height="0.8" fill="#d9d8d2" opacity="0.54"/>
        <rect x="90.2" y="172.2" width="1.7" height="1.8" fill="#e8e6e0" opacity="0.89"/>
        <rect x="89.8" y="157.9" width="2.6" height="1.2" fill="#c8c6bf" opacity="0.88"/>
        <rect x="98.2" y="217.5" width="3.2" height="0.8" fill="#e8e6e0" opacity="0.83"/>
        <rect x="90.6" y="179.2" width="2.1" height="1.0" fill="#5f6163" opacity="0.87"/>
        <rect x="105.3" y="217.9" width="2.1" height="1.6" fill="#5f6163" opacity="0.76"/>
        <rect x="107.9" y="135.9" width="3.6" height="1.4" fill="#707274" opacity="0.90"/>
        <rect x="92.6" y="78.8" width="1.2" height="0.7" fill="#c8c6bf" opacity="0.58"/>
        <rect x="88.0" y="239.0" width="2.4" height="1.7" fill="#d9d8d2" opacity="0.67"/>
        <rect x="94.8" y="249.2" width="3.8" height="1.1" fill="#e8e6e0" opacity="0.54"/>
        <rect x="91.0" y="73.9" width="2.1" height="1.2" fill="#e8e6e0" opacity="0.56"/>
        <rect x="93.6" y="100.7" width="1.5" height="1.1" fill="#c8c6bf" opacity="0.51"/>
        <rect x="110.3" y="115.8" width="3.3" height="1.1" fill="#d9d8d2" opacity="0.78"/>
        <rect x="104.5" y="144.6" width="3.8" height="0.9" fill="#5f6163" opacity="0.62"/>
        <rect x="104.5" y="202.8" width="1.5" height="1.0" fill="#d9d8d2" opacity="0.73"/>
        <rect x="104.1" y="177.6" width="3.7" height="1.6" fill="#5f6163" opacity="0.57"/>
        <rect x="96.4" y="53.1" width="4.0" height="1.3" fill="#c8c6bf" opacity="0.57"/>
        <rect x="92.4" y="47.9" width="2.8" height="1.6" fill="#5f6163" opacity="0.50"/>
        <rect x="88.6" y="214.1" width="2.2" height="0.8" fill="#707274" opacity="0.83"/>
        <rect x="108.8" y="165.7" width="3.8" height="1.6" fill="#c8c6bf" opacity="0.86"/>
        <rect x="99.8" y="249.5" width="1.2" height="1.0" fill="#d9d8d2" opacity="0.70"/>
        <rect x="107.3" y="48.8" width="3.5" height="1.3" fill="#d9d8d2" opacity="0.85"/>
        <rect x="111.7" y="82.0" width="3.1" height="1.5" fill="#c8c6bf" opacity="0.71"/>
        <rect x="89.2" y="108.9" width="1.3" height="1.4" fill="#c8c6bf" opacity="0.74"/>
        <rect x="109.3" y="86.5" width="1.1" height="1.4" fill="#e8e6e0" opacity="0.67"/>
        <rect x="107.0" y="156.0" width="1.4" height="0.7" fill="#5f6163" opacity="0.78"/>
        <rect x="110.2" y="263.9" width="2.7" height="0.9" fill="#e8e6e0" opacity="0.54"/>
        <rect x="107.1" y="223.2" width="1.9" height="0.9" fill="#d9d8d2" opacity="0.69"/>
        <rect x="105.1" y="218.5" width="3.9" height="1.6" fill="#5f6163" opacity="0.52"/>
        <rect x="105.2" y="48.9" width="1.6" height="1.1" fill="#5f6163" opacity="0.85"/>
        <rect x="88.9" y="211.9" width="2.1" height="1.7" fill="#d9d8d2" opacity="0.86"/>
        <rect x="104.0" y="209.7" width="2.7" height="1.3" fill="#d9d8d2" opacity="0.79"/>
        <rect x="105.2" y="98.5" width="3.4" height="1.2" fill="#c8c6bf" opacity="0.63"/>
        <rect x="95.0" y="69.0" width="2.5" height="1.1" fill="#d9d8d2" opacity="0.53"/>
        <rect x="106.9" y="163.9" width="1.1" height="0.8" fill="#c8c6bf" opacity="0.83"/>
        <rect x="98.3" y="96.3" width="3.9" height="0.7" fill="#707274" opacity="0.67"/>
        <rect x="96.4" y="112.7" width="1.0" height="1.5" fill="#c8c6bf" opacity="0.79"/>
        <rect x="89.5" y="157.9" width="1.5" height="1.6" fill="#e8e6e0" opacity="0.81"/>
        <rect x="98.3" y="135.1" width="2.0" height="1.3" fill="#c8c6bf" opacity="0.68"/>
        <rect x="98.3" y="137.8" width="3.3" height="1.9" fill="#707274" opacity="0.69"/>
        <rect x="99.8" y="38.4" width="1.4" height="1.8" fill="#d9d8d2" opacity="0.58"/>
        <rect x="87.0" y="243.4" width="1.7" height="1.6" fill="#5f6163" opacity="0.66"/>
        <rect x="79" y="52" width="9" height="3" fill="#707274"/>
        <rect x="77" y="84" width="10" height="4" fill="#7a7c7e"/>
        <rect x="80" y="116" width="7" height="3" fill="#7a7c7e"/>
        <rect x="112" y="81" width="20" height="11" fill="#b9b7b0"/>
        <rect x="113" y="95" width="14" height="4" fill="#a5a39c"/>
        <rect x="81" y="32" width="7" height="6" fill="#6e7072"/>
        <rect x="110" y="185" width="12" height="82" fill="#cdc7b6" opacity=".9"/>
        <rect x="110" y="200" width="12" height="1.2" fill="#a9a392"/><rect x="110" y="215" width="12" height="1.2" fill="#a9a392"/><rect x="110" y="230" width="12" height="1.2" fill="#a9a392"/><rect x="110" y="245" width="12" height="1.2" fill="#a9a392"/>
        <!-- A-frame lower tower -->
        <path d="M111 196L150 268H144L109 206Z" fill="#dcd6c6"/>
        <path d="M112 222L138 268H132L110 232Z" fill="#d3ccba"/>
        <path d="M110 250H146V254H110Z" fill="#d6d0bf" opacity=".85"/>
        <path d="M118 232L126 232L128 236H118Z" fill="#d6d0bf" opacity=".7"/>
        <path d="M124 268L136 240L138 243L128 268Z" fill="#cfc8b6" opacity=".8"/>
        <rect x="110" y="215" width="14" height="4" fill="#cbc5b5" opacity=".7"/>
        <!-- orion / LAS -->
        <path d="M91.3 50L92.1 56V70L94.6 70L96 84L99 97L100 107.5H83L84 97L87 84L88.2 70L90.5 70V56Z" fill="#ebebeb"/>
        <path d="M91.6 52L92.1 70L94.6 70L96 84L99 97L100 107.5H94.5L94 84Z" fill="#d0d1d3"/>
        <rect x="83.6" y="97" width="15.8" height="1.2" fill="#b9babc"/>
        <!-- core -->
        <path d="M83 107H100L101.8 126V245H81.7V126Z" fill="#94502f"/>
        <path d="M83 107H100L101.8 126H81.7Z" fill="#dba862"/>
        <rect x="81.7" y="125.8" width="20.1" height="2" fill="#d9b686"/>
        <rect x="81.7" y="146" width="20.1" height="2" fill="#c9936a"/>
        <rect x="81.7" y="184" width="20.1" height="1.8" fill="#c28a62"/>
        <rect x="86" y="130" width="4" height="115" fill="#bb6f43" opacity=".7"/>
        <rect x="93" y="130" width="1.5" height="115" fill="#e0b38a" opacity=".5"/>
        <path d="M81.7 232H101.8V246H81.7Z" fill="#b87a58" opacity=".8"/>
        <!-- boosters -->
        <path d="M74 160L77.2 148L80.5 160V246H74Z" fill="#cfcfcf"/><rect x="74" y="160" width="2" height="86" fill="#a9a9ab"/>
        <path d="M101.8 159L106.2 147.5L110.8 159V267H101.8Z" fill="#e6e6e6"/>
        <path d="M106 160L110.8 160V267H106Z" fill="#f4f4f4"/>
        <rect x="75.5" y="200" width="1.8" height="14" fill="#a85c52" opacity=".75"/>
        <rect x="104" y="200" width="2" height="14" fill="#a85c52" opacity=".75"/>
        <!-- treeline -->
        <rect x="19" y="257.5" width="160" height="15" fill="#535a4d"/>
        
        <rect x="19" y="272" width="160" height="16" fill="#4a4f47"/>
        <!-- vegetation -->
        <rect x="19" y="287" width="160" height="49" fill="url(#veg)"/>
        <ellipse cx="91.4" cy="314.9" rx="5.7" ry="2.8" fill="#8d9570" opacity="0.44"/><ellipse cx="155.8" cy="297.1" rx="5.2" ry="2.6" fill="#8d9570" opacity="0.49"/><ellipse cx="145.9" cy="292.5" rx="3.2" ry="1.6" fill="#7f8a62" opacity="0.46"/><ellipse cx="161.5" cy="318.5" rx="4.4" ry="2.2" fill="#8d9570" opacity="0.59"/><ellipse cx="123.6" cy="317.5" rx="2.6" ry="1.3" fill="#7f8a62" opacity="0.55"/><ellipse cx="29.1" cy="289.7" rx="5.5" ry="2.8" fill="#7f8a62" opacity="0.53"/><ellipse cx="71.2" cy="316.4" rx="2.8" ry="1.4" fill="#5d6947" opacity="0.49"/><ellipse cx="99.0" cy="319.8" rx="3.8" ry="1.9" fill="#727d55" opacity="0.42"/><ellipse cx="107.2" cy="332.7" rx="2.3" ry="1.2" fill="#727d55" opacity="0.39"/><ellipse cx="55.7" cy="301.9" rx="2.3" ry="1.1" fill="#7f8a62" opacity="0.42"/><ellipse cx="154.5" cy="306.6" rx="5.8" ry="2.9" fill="#7f8a62" opacity="0.36"/><ellipse cx="167.3" cy="290.5" rx="3.5" ry="1.8" fill="#8d9570" opacity="0.43"/><ellipse cx="109.6" cy="297.5" rx="4.7" ry="2.3" fill="#727d55" opacity="0.33"/><ellipse cx="72.2" cy="334.3" rx="5.0" ry="2.5" fill="#7f8a62" opacity="0.34"/><ellipse cx="132.1" cy="288.5" rx="3.9" ry="1.9" fill="#8d9570" opacity="0.35"/><ellipse cx="108.5" cy="309.5" rx="2.8" ry="1.4" fill="#5d6947" opacity="0.43"/><ellipse cx="80.4" cy="307.0" rx="6.0" ry="3.0" fill="#7f8a62" opacity="0.38"/><ellipse cx="174.3" cy="326.6" rx="3.2" ry="1.6" fill="#7f8a62" opacity="0.36"/><ellipse cx="82.1" cy="329.0" rx="4.6" ry="2.3" fill="#7f8a62" opacity="0.31"/><ellipse cx="42.4" cy="309.2" rx="2.0" ry="1.0" fill="#727d55" opacity="0.55"/><ellipse cx="80.8" cy="291.6" rx="2.8" ry="1.4" fill="#5d6947" opacity="0.30"/><ellipse cx="78.0" cy="317.9" rx="2.5" ry="1.3" fill="#8d9570" opacity="0.55"/><ellipse cx="40.7" cy="306.5" rx="4.5" ry="2.3" fill="#727d55" opacity="0.57"/><ellipse cx="149.8" cy="300.0" rx="2.8" ry="1.4" fill="#5d6947" opacity="0.51"/><ellipse cx="81.1" cy="311.2" rx="2.3" ry="1.2" fill="#7f8a62" opacity="0.33"/><ellipse cx="25.2" cy="334.2" rx="3.0" ry="1.5" fill="#8d9570" opacity="0.38"/><ellipse cx="150.8" cy="316.6" rx="3.2" ry="1.6" fill="#5d6947" opacity="0.58"/><ellipse cx="175.3" cy="294.1" rx="3.9" ry="2.0" fill="#7f8a62" opacity="0.38"/><ellipse cx="165.8" cy="297.8" rx="2.1" ry="1.0" fill="#727d55" opacity="0.42"/><ellipse cx="58.9" cy="290.2" rx="3.1" ry="1.6" fill="#5d6947" opacity="0.33"/><ellipse cx="41.1" cy="309.6" rx="3.3" ry="1.7" fill="#5d6947" opacity="0.48"/><ellipse cx="166.8" cy="310.8" rx="3.4" ry="1.7" fill="#727d55" opacity="0.59"/><ellipse cx="22.4" cy="318.5" rx="3.9" ry="2.0" fill="#727d55" opacity="0.40"/><ellipse cx="178.9" cy="291.6" rx="4.2" ry="2.1" fill="#7f8a62" opacity="0.57"/><ellipse cx="136.9" cy="321.8" rx="5.2" ry="2.6" fill="#727d55" opacity="0.41"/><ellipse cx="128.6" cy="331.2" rx="5.5" ry="2.7" fill="#8d9570" opacity="0.58"/><ellipse cx="23.8" cy="312.0" rx="2.1" ry="1.0" fill="#8d9570" opacity="0.41"/><ellipse cx="21.0" cy="291.5" rx="2.4" ry="1.2" fill="#7f8a62" opacity="0.60"/><ellipse cx="159.8" cy="323.0" rx="3.6" ry="1.8" fill="#8d9570" opacity="0.43"/><ellipse cx="153.1" cy="292.0" rx="5.0" ry="2.5" fill="#7f8a62" opacity="0.39"/><ellipse cx="33.0" cy="289.1" rx="5.8" ry="2.9" fill="#7f8a62" opacity="0.45"/><ellipse cx="117.3" cy="332.2" rx="3.0" ry="1.5" fill="#7f8a62" opacity="0.41"/><ellipse cx="41.9" cy="317.4" rx="4.1" ry="2.0" fill="#727d55" opacity="0.50"/><ellipse cx="89.7" cy="330.8" rx="3.3" ry="1.7" fill="#727d55" opacity="0.36"/><ellipse cx="87.9" cy="326.7" rx="5.7" ry="2.8" fill="#5d6947" opacity="0.42"/><ellipse cx="112.3" cy="303.2" rx="2.5" ry="1.3" fill="#8d9570" opacity="0.41"/><ellipse cx="162.3" cy="289.9" rx="2.3" ry="1.1" fill="#727d55" opacity="0.55"/><ellipse cx="37.1" cy="310.6" rx="5.7" ry="2.9" fill="#8d9570" opacity="0.41"/><ellipse cx="102.2" cy="320.3" rx="4.9" ry="2.4" fill="#8d9570" opacity="0.40"/><ellipse cx="151.6" cy="301.3" rx="4.4" ry="2.2" fill="#727d55" opacity="0.47"/><ellipse cx="68.4" cy="326.0" rx="2.1" ry="1.0" fill="#5d6947" opacity="0.42"/><ellipse cx="49.4" cy="324.9" rx="3.1" ry="1.5" fill="#5d6947" opacity="0.54"/><ellipse cx="176.4" cy="293.5" rx="2.4" ry="1.2" fill="#727d55" opacity="0.59"/><ellipse cx="128.5" cy="297.6" rx="3.9" ry="2.0" fill="#5d6947" opacity="0.51"/><ellipse cx="139.8" cy="313.7" rx="2.1" ry="1.1" fill="#5d6947" opacity="0.38"/><ellipse cx="74.3" cy="321.5" rx="4.1" ry="2.0" fill="#5d6947" opacity="0.42"/><ellipse cx="145.7" cy="331.5" rx="2.3" ry="1.2" fill="#8d9570" opacity="0.34"/><ellipse cx="91.6" cy="318.0" rx="5.6" ry="2.8" fill="#8d9570" opacity="0.47"/><ellipse cx="123.4" cy="312.1" rx="5.3" ry="2.6" fill="#727d55" opacity="0.44"/><ellipse cx="123.2" cy="297.8" rx="4.9" ry="2.4" fill="#7f8a62" opacity="0.36"/><ellipse cx="163.0" cy="335.1" rx="5.9" ry="3.0" fill="#727d55" opacity="0.38"/><ellipse cx="133.9" cy="288.8" rx="4.0" ry="2.0" fill="#7f8a62" opacity="0.43"/><ellipse cx="107.0" cy="324.9" rx="3.9" ry="2.0" fill="#7f8a62" opacity="0.37"/><ellipse cx="157.8" cy="308.6" rx="2.1" ry="1.1" fill="#727d55" opacity="0.51"/><ellipse cx="165.6" cy="310.6" rx="6.0" ry="3.0" fill="#8d9570" opacity="0.58"/><ellipse cx="97.8" cy="333.6" rx="2.3" ry="1.2" fill="#5d6947" opacity="0.43"/><ellipse cx="108.4" cy="327.9" rx="4.2" ry="2.1" fill="#5d6947" opacity="0.46"/><ellipse cx="154.0" cy="314.9" rx="3.2" ry="1.6" fill="#8d9570" opacity="0.59"/><ellipse cx="158.2" cy="317.3" rx="3.2" ry="1.6" fill="#5d6947" opacity="0.59"/><ellipse cx="102.9" cy="315.5" rx="2.8" ry="1.4" fill="#7f8a62" opacity="0.45"/>
        <!-- launcher columns -->
        <path d="M68 245H96V268H68Z" fill="#4d5153"/>
        <rect x="72" y="246" width="5" height="22" fill="#6a6d70"/>
        <rect x="82" y="246" width="6" height="22" fill="#5f6265"/>
        <path d="M62 246L48 268H52L64 250Z" fill="#4b4e50"/>
        <!-- platform -->
        <rect x="41" y="268" width="61" height="18" fill="#55585a"/>
        <rect x="41" y="268" width="20" height="18" fill="#606365"/>
        <path d="M53 272L46 282H48.5L53 275.5L57.5 282H60Z" fill="#a0a3a6" opacity=".85"/>
        <rect x="102.5" y="269" width="25.5" height="16.5" fill="#9d7377"/>
        <rect x="102.5" y="270.5" width="25.5" height="1.5" fill="#e3e3e6"/>
        <rect x="102.5" y="274" width="25.5" height="1.5" fill="#e3e3e6"/>
        <rect x="102.5" y="277.5" width="25.5" height="1.5" fill="#e3e3e6"/>
        <rect x="102.5" y="281" width="25.5" height="1.5" fill="#e3e3e6"/>
        <rect x="102.5" y="269" width="11" height="8" fill="#4a5478"/>
        <rect x="128" y="268" width="26.5" height="17" fill="#ddd6c4"/>
        <rect x="129" y="271" width="24" height="1.6" fill="#b3a992"/>
        <rect x="129" y="277" width="24" height="1.6" fill="#b3a992"/>
        <path d="M19 280Q24 276 31 277Q36 279 37 284V288H19Z" fill="#d6cdb6"/>
        <rect x="41" y="285.5" width="115" height="6" fill="#3e4140"/>
      </g>
      <!-- red strip -->
      <rect x="0" y="21" width="19" height="315" fill="url(#red)"/>
      <rect x="0" y="257.5" width="19" height="16" fill="#5c1a13"/>
      <path d="M0 273.5H19V285C13 283 6 284 0 286Z" fill="#97291d"/>
      <rect x="0" y="285" width="19" height="51" fill="#7a2118"/>
      <!-- status -->
      <text x="3.2" y="29.3" font-family="Liberation Sans" font-size="5.9" fill="#fff">12:09</text>
      <path d="M24.5 29.5h6a1.6 1.6 0 0 0 0-3.2a2.2 2.2 0 0 0-4.2-0.6a1.9 1.9 0 0 0-1.8 3.8z" fill="#fff"/>
      <path d="M35 24.3V30.3L40 27.3Z" fill="none" stroke="#fff" stroke-width="0.9"/>
      <path d="M151.5 25.5L158.5 25.5L155 30Z" fill="#fff"/>
      <path d="M164 24.3V30H158.5Z" fill="#fff"/>
      <rect x="166.5" y="24" width="3" height="6" fill="#fff"/>
      <!-- back + search -->
      <path d="M16.5 41.5H8M11.5 38L8 41.5L11.5 45" fill="none" stroke="#fff" stroke-width="1.2"/>
      <rect x="23.5" y="34.5" width="149" height="14" rx="4" fill="rgba(255,255,255,.08)" stroke="rgba(255,255,255,.75)" stroke-width="0.8"/>
      <circle cx="31" cy="41.2" r="2.4" fill="none" stroke="#fff" stroke-width="0.8"/>
      <path d="M32.7 42.9L34.4 44.6" stroke="#fff" stroke-width="0.8"/>
      <text x="37.8" y="43.6" font-family="Liberation Sans" font-size="6.35" fill="#fff" opacity=".9">Find related content</text>
      <path d="M143.4 37.5V46" stroke="rgba(255,255,255,.35)" stroke-width="0.6"/>
      <text x="148.6" y="43.6" font-family="Liberation Sans" font-size="6.2" fill="#fff" opacity=".9">Search</text>
      <!-- BBC & overlay text -->
      <g fill="rgba(255,255,255,.55)"><rect x="27" y="59.6" width="6" height="5.6"/><rect x="34.6" y="59.6" width="6" height="5.6"/><rect x="42.2" y="59.6" width="6" height="5.6"/></g>
      <g font-family="Liberation Sans" font-size="5.3" fill="rgba(255,255,255,.85)" text-anchor="end">
        <text x="164" y="64">Posted on 13.01.2026</text>
        <text x="164" y="70.6">This video has been sped up</text>
        <text x="164" y="77.2">Video has no sound</text>
        <text x="164" y="84" font-weight="bold">Nasa</text>
      </g>
      <!-- right icons -->
      <circle cx="166.8" cy="191" r="10.2" fill="#e8587f"/>
      <circle cx="166.8" cy="191" r="8.6" fill="#c42a27"/>
      <g fill="#fff"><rect x="162" y="187.5" width="2.6" height="2.6"/><rect x="165.4" y="187.5" width="2.6" height="2.6"/><rect x="168.8" y="187.5" width="2.6" height="2.6"/></g>
      <text x="166.8" y="194.6" font-family="Liberation Sans" font-size="2.6" fill="#fff" text-anchor="middle">NEWS</text>
      <circle cx="166.8" cy="202" r="3.6" fill="#e8334a"/>
      <path d="M166.8 200.2V203.8M165 202H168.6" stroke="#fff" stroke-width="0.8"/>
      <path d="M166.8 225.5C162 222 160.6 220 160.6 217.8C160.6 216 162 214.6 163.7 214.6C165 214.6 166 215.4 166.8 216.4C167.6 215.4 168.6 214.6 169.9 214.6C171.6 214.6 173 216 173 217.8C173 220 171.6 222 166.8 225.5Z" fill="#fff" opacity=".95"/>
      <text x="166.8" y="232" font-family="Liberation Sans" font-size="4.6" fill="rgba(255,255,255,.75)" text-anchor="middle">103K</text>
      <ellipse cx="166.8" cy="244.5" rx="6.2" ry="5.2" fill="#fff" opacity=".95"/>
      <path d="M162.5 248L161.5 251L165 249Z" fill="#fff"/>
      <g fill="#9aa"><circle cx="164.2" cy="244.5" r="0.7"/><circle cx="166.8" cy="244.5" r="0.7"/><circle cx="169.4" cy="244.5" r="0.7"/></g>
      <text x="166.8" y="257" font-family="Liberation Sans" font-size="4.6" fill="rgba(255,255,255,.75)" text-anchor="middle">154</text>
      <path d="M162.5 264.5H171V276L166.8 272.5L162.5 276Z" fill="#fff" opacity=".95"/>
      
      <path d="M167 289.5L173 294.5L167 299.5V296.5C163.5 296.5 161.5 297.5 160 300.5C160.5 296 162.5 292.8 167 292.5Z" fill="#fff" opacity=".95"/>
      <text x="166.8" y="309" font-family="Liberation Sans" font-size="4.8" fill="rgba(255,255,255,.85)" text-anchor="middle">144</text>
      <circle cx="166.8" cy="321.4" r="8" fill="#c42a27"/>
      <g fill="#fff"><rect x="162.6" y="318" width="2.4" height="2.4"/><rect x="165.6" y="318" width="2.4" height="2.4"/><rect x="168.6" y="318" width="2.4" height="2.4"/></g>
      <text x="166.8" y="324.6" font-family="Liberation Sans" font-size="2.6" fill="#fff" text-anchor="middle">NEWS</text>
      <!-- bottom caption -->
      <rect x="5.4" y="291.3" width="57" height="9.7" rx="1.5" fill="rgba(30,30,30,.55)"/>
      <rect x="6.8" y="292.3" width="8" height="7.7" rx="1" fill="#3fb59a"/>
      <rect x="8.6" y="294" width="4.4" height="4.4" fill="none" stroke="#fff" stroke-width="0.7"/>
      <text x="17.6" y="298.7" font-family="Liberation Sans" font-weight="bold" font-size="5.2" fill="#fff">Tap to read more</text>
      <text x="4.9" y="312.8" font-family="Liberation Sans" font-weight="bold" font-size="6.7" fill="#fff">BBC News</text>
      <circle cx="43.5" cy="310.4" r="2.5" fill="#3aa3e8"/>
      <path d="M42.2 310.4L43.2 311.4L44.9 309.4" fill="none" stroke="#fff" stroke-width="0.6"/>
      <text x="47" y="312.8" font-family="Liberation Sans" font-size="6.4" fill="rgba(255,255,255,.6)">· 20h ago</text>
      <text x="4.9" y="323.8" font-family="Liberation Sans" font-size="6.3" fill="rgba(255,255,255,.92)">It took almost 12 hours to move the rocket four</text>
      <text x="4.9" y="331.7" font-family="Liberation Sans" font-size="6.3" fill="rgba(255,255,255,.92)">miles (6.5km) to the launch pad. #Nasa ...more</text>
    </g>
    <!-- bottom black -->
    <rect x="0" y="336" width="179" height="44" fill="#000"/>
    <rect x="5" y="337.4" width="169.7" height="18.2" rx="9.1" fill="#2d2d2e"/>
    <text x="10" y="349" font-family="Liberation Sans" font-size="6.4" fill="#a8a8a8">Add comment...</text>
    <circle cx="128.5" cy="346.4" r="4.3" fill="#f5c33b"/>
    <path d="M126 345.4Q126.8 344.2 127.6 345.4M129.4 345.4Q130.2 344.2 131 345.4" stroke="#6b4a1a" stroke-width="0.6" fill="none"/>
    <path d="M126 347.4Q128.5 350.5 131 347.4Z" fill="#6b4a1a"/>
    <path d="M146.5 350.8C143 348 141.8 346.6 141.8 345C141.8 343.6 142.8 342.6 144.1 342.6C145.1 342.6 145.9 343.2 146.5 344C147.1 343.2 147.9 342.6 148.9 342.6C150.2 342.6 151.2 343.6 151.2 345C151.2 346.6 150 348 146.5 350.8Z" fill="#e8523a"/>
    <circle cx="164.6" cy="346.4" r="4.3" fill="#f5c33b"/>
    <circle cx="163" cy="345.6" r="1" fill="#fff" stroke="#6b4a1a" stroke-width="0.4"/><circle cx="166.2" cy="345.6" r="1" fill="#fff" stroke="#6b4a1a" stroke-width="0.4"/>
    <ellipse cx="164.6" cy="348.6" rx="0.9" ry="0.7" fill="#6b4a1a"/>
    <path d="M40.5 364.5L35 367.9L40.5 371.3Z" fill="#fff"/>
    <circle cx="89.8" cy="367.9" r="2.7" fill="#fff"/>
    <rect x="138.8" y="365.2" width="5.4" height="5.4" fill="#fff"/>
    <!-- side panel icons -->
    <g fill="rgba(255,255,255,.35)" stroke="#e6e7eb" stroke-width="0.6">
      <circle cx="191.2" cy="37.3" r="7.4"/>
      <circle cx="191.2" cy="61" r="7.4"/>
      <circle cx="191.2" cy="93.8" r="7.4"/>
      <circle cx="191.2" cy="126.3" r="7.4"/>
      <circle cx="191.2" cy="159" r="7.4"/>
      <circle cx="191.2" cy="191.2" r="7.4"/>
      <circle cx="191.2" cy="223.8" r="7.4"/>
      <circle cx="191.2" cy="256.2" r="7.4"/>
      <circle cx="191.2" cy="354.2" r="7.4"/>
    </g>
    <g fill="#4cbb5e"><rect x="187" y="38.6" width="1.6" height="1.8"/><rect x="189" y="37" width="1.6" height="3.4"/><rect x="191" y="35.4" width="1.6" height="5"/><rect x="193" y="33.8" width="1.6" height="6.6"/></g>
    <g fill="none" stroke="#555" stroke-width="0.75">
      <circle cx="191.2" cy="61" r="3.6"/><path d="M191.2 58.8V61.2L192.8 62.4"/>
      <rect x="188.2" y="93" width="4.2" height="3.8"/><path d="M190 91.6V90.6H193.4V96.6"/>
      <rect x="188.4" y="123.5" width="5.6" height="5.6"/><path d="M189.2 124.3L193.2 128.3M193.2 124.3L189.2 128.3"/>
      <path d="M188.2 157V162H194.2V157M191.2 156.5V159.8M189.8 157.8L191.2 156.4L192.6 157.8"/>
      <path d="M191.2 187.8V192.8M189.4 191.2L191.2 193L193 191.2M188.2 194.4H194.2"/>
      <circle cx="191.2" cy="223" r="2.6"/><path d="M189.4 226.4H193"/>
      <rect x="188.6" y="351.6" width="5.2" height="5"/><path d="M190 351.6V350.4H192.4V351.6"/>
    </g>
    <g fill="#555"><circle cx="191.2" cy="254.2" r="0.55"/><circle cx="191.2" cy="256.2" r="0.55"/><circle cx="191.2" cy="258.2" r="0.55"/></g>
    <g font-family="Liberation Sans" font-size="6.1" fill="#444" text-anchor="middle">
      <text x="191.2" y="75.3">Timer</text>
      <text x="191.2" y="108.6">Rotate</text>
      <text x="191.2" y="141.2">Scre...</text>
      <text x="191.2" y="174">Uplo...</text>
      <text x="191.2" y="206.2">Export</text>
      <text x="191.2" y="238.6">Cam...</text>
      <text x="191.2" y="271">More</text>
      <text x="191.2" y="370">Apps</text>
    </g>
  </svg>
</div>
</body></html>
